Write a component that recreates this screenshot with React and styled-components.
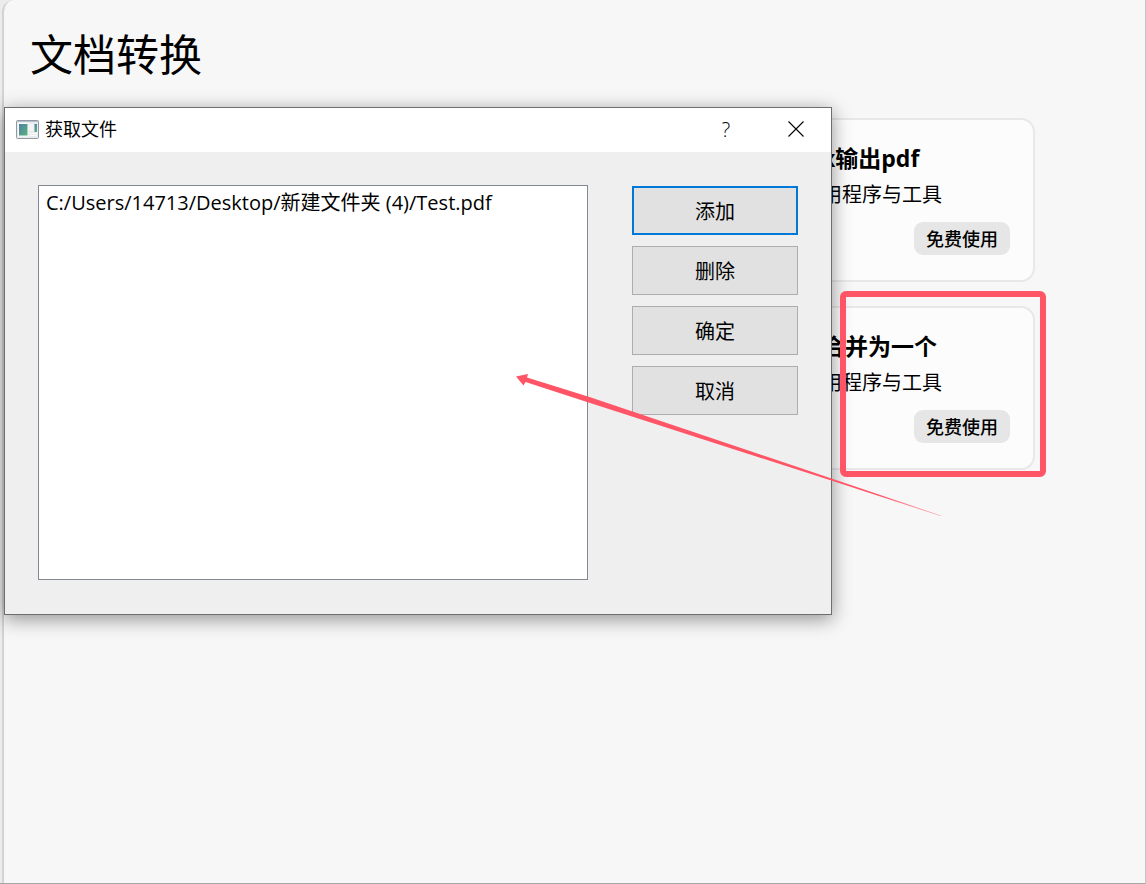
import React from "react";
import styled, { createGlobalStyle } from "styled-components";

const GlobalStyle = createGlobalStyle`
  * { box-sizing: border-box; }
  body {
    margin: 0;
    background: #ececec;
    color: #000;
    font-family: "Open Sans", "Noto Sans CJK SC", sans-serif;
  }
  h1, h2, p, ul { margin: 0; padding: 0; }
  button { font-family: inherit; color: inherit; }
`;

const Page = styled.main`
  position: relative;
  min-height: 100vh;
  overflow: hidden;
  padding: 0 0 0 2px;
  border-right: 1px solid #c4c4c4;
  border-bottom: 1px solid #a6a6a6;
`;

const Panel = styled.section`
  min-height: calc(100vh - 1px);
  padding: 23px 110px 0 26px;
  background: #f7f7f7;
  border-left: 2px solid #d2d4d4;
  border-top-left-radius: 12px;
`;

const Heading = styled.h1`
  font-size: 43px;
  line-height: 64px;
  font-weight: 400;
`;

const CardList = styled.ul`
  display: grid;
  justify-content: end;
  grid-template-columns: 230px;
  gap: 24px;
  margin-top: 31px;
  list-style: none;
`;

const Card = styled.li`
  display: flex;
  flex-direction: column;
  height: 164px;
  padding: 20px 23px 24px 15px;
  background: #fcfcfc;
  border: 2px solid #e8e8e8;
  border-radius: 14px;
`;

const CardTitle = styled.h2`
  font-size: 23px;
  line-height: 37px;
  font-weight: 700;
  white-space: nowrap;
`;

const CardText = styled.p`
  font-size: 20px;
  line-height: 36px;
  white-space: nowrap;
`;

const UseButton = styled.button`
  align-self: flex-end;
  width: 96px;
  height: 33px;
  margin-top: 9px;
  padding: 0;
  font-size: 18px;
  line-height: 32px;
  font-weight: 500;
  white-space: nowrap;
  background: #e6e6e6;
  border: 0;
  border-radius: 9px;
`;

const Dialog = styled.section`
  position: absolute;
  left: 4px;
  top: 107px;
  width: 828px;
  background: #efefef;
  border: 1px solid #6e6e6e;
  box-shadow: 0 4px 18px rgba(0, 0, 0, 0.42);
`;

const TitleBar = styled.header`
  display: flex;
  align-items: center;
  height: 44px;
  padding: 0 0 2px 11px;
  background: #fff;
`;

const DialogTitle = styled.h2`
  flex: 1;
  margin-left: 6px;
  font-size: 18px;
  line-height: 42px;
  font-weight: 400;
`;

const CaptionButton = styled.button`
  display: grid;
  place-items: center;
  width: 70px;
  height: 42px;
  padding: 0;
  font-size: 20px;
  font-weight: 300;
  background: transparent;
  border: 0;
`;

const DialogBody = styled.div`
  display: grid;
  grid-template-columns: 1fr 166px;
  gap: 44px;
  padding: 33px 33px 34px;
`;

const FileList = styled.ul`
  height: 395px;
  padding: 2px 7px;
  background: #fff;
  border: 1px solid #828790;
  list-style: none;
`;

const FileItem = styled.li`
  font-size: 20px;
  line-height: 30px;
  white-space: nowrap;
`;

const Actions = styled.div`
  display: flex;
  flex-direction: column;
  gap: 11px;
  padding-top: 1px;
`;

const ActionButton = styled.button`
  height: 49px;
  padding: 0;
  font-size: 20px;
  background: #e1e1e1;
  border: ${(p) => (p.$primary ? "2px solid #0078d7" : "1px solid #adadad")};
`;

const Marker = styled.div`
  position: absolute;
  left: 840px;
  top: 291px;
  width: 206px;
  height: 186px;
  border: 6px solid #ff5566;
  border-radius: 6px;
  pointer-events: none;
`;

const Arrow = styled.svg`
  position: absolute;
  left: 516px;
  top: 373px;
  pointer-events: none;
`;

const WindowIcon = () => (
  <svg width="23" height="19" viewBox="0 0 23 19" aria-hidden="true">
    <defs>
      <linearGradient id="screen" x1="0" y1="0" x2="1" y2="1">
        <stop offset="0" stopColor="#4b7fa6" />
        <stop offset="1" stopColor="#5cb57c" />
      </linearGradient>
    </defs>
    <rect x="0.5" y="0.5" width="22" height="18" rx="1" fill="#e9ecee" stroke="#9299a0" />
    <path d="M1 1.5H22" stroke="#b5c1ce" />
    <rect x="2.5" y="3.5" width="9.5" height="12.5" fill="url(#screen)" stroke="#fafafa" />
    <rect x="13.5" y="4" width="4" height="7" fill="#f5f5f5" />
    <rect x="18.5" y="4" width="2.5" height="8" fill="url(#screen)" />
    <path d="M13.5 13.5H21M13.5 15.5H21" stroke="#fafafa" />
  </svg>
);

const CloseIcon = () => (
  <svg width="16" height="16" viewBox="0 0 16 16" fill="none" stroke="#000" strokeWidth="1.1" aria-hidden="true">
    <path d="M0.5 0.5L15.5 15.5M15.5 0.5L0.5 15.5" />
  </svg>
);

const cards = [
  { title: "x输出pdf", text: "用程序与工具" },
  { title: "合并为一个", text: "用程序与工具" },
];

const actions = ["添加", "删除", "确定", "取消"];

export default function App() {
  return (
    <>
      <GlobalStyle />
      <Page>
        <Panel>
          <Heading>文档转换</Heading>
          <CardList>
            {cards.map((card) => (
              <Card key={card.title}>
                <CardTitle>{card.title}</CardTitle>
                <CardText>{card.text}</CardText>
                <UseButton type="button">免费使用</UseButton>
              </Card>
            ))}
          </CardList>
        </Panel>

        <Dialog role="dialog" aria-labelledby="dialog-title">
          <TitleBar>
            <WindowIcon />
            <DialogTitle id="dialog-title">获取文件</DialogTitle>
            <CaptionButton type="button">?</CaptionButton>
            <CaptionButton type="button" aria-label="关闭">
              <CloseIcon />
            </CaptionButton>
          </TitleBar>
          <DialogBody>
            <FileList>
              <FileItem>C:/Users/14713/Desktop/新建文件夹 (4)/Test.pdf</FileItem>
            </FileList>
            <Actions>
              {actions.map((label, i) => (
                <ActionButton key={label} type="button" $primary={i === 0}>
                  {label}
                </ActionButton>
              ))}
            </Actions>
          </DialogBody>
        </Dialog>

        <Marker />
        <Arrow width="426" height="146" viewBox="0 0 426 146" aria-hidden="true">
          <defs>
            <linearGradient id="fade" gradientUnits="userSpaceOnUse" x1="0" y1="0" x2="426" y2="143">
              <stop offset="0.85" stopColor="#ff5566" />
              <stop offset="1" stopColor="#ff5566" stopOpacity="0.4" />
            </linearGradient>
          </defs>
          <path
            d="M0 3.5L12 1L11 4.5L72 23.5L317 106L425 142.5L425 143.2L316 107.8L71 29L9.5 9L7.5 12.5Z"
            fill="url(#fade)"
          />
        </Arrow>
      </Page>
    </>
  );
}
